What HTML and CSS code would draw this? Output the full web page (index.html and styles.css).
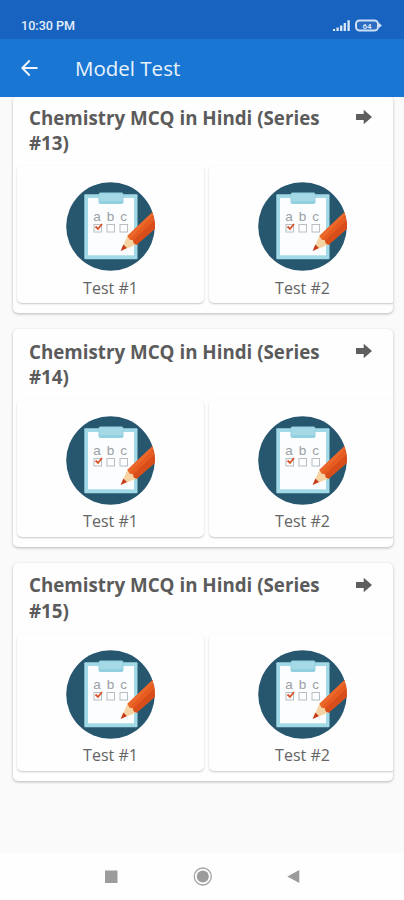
FILE: index.html
```html
<!DOCTYPE html>
<html lang="en">
<head>
<meta charset="utf-8">
<title>Model Test</title>
<link rel="stylesheet" href="styles.css">
</head>
<body>
<svg class="defs" width="0" height="0" aria-hidden="true">
  <defs>
    <clipPath id="disc"><circle cx="44.5" cy="44.5" r="44.5"/></clipPath>
    <symbol id="quiz" viewBox="0 0 90 90">
      <circle cx="44.5" cy="44.5" r="44.3" fill="#27566f"/>
      <rect x="18.3" y="12.3" width="53.2" height="65" rx="1" fill="#a2d9e6"/>
      <rect x="22" y="16" width="46" height="57.3" fill="#fcfdfe"/>
      <rect x="32.5" y="10.5" width="25" height="11.5" rx="2" fill="#92cfdf"/>
      <rect x="33.5" y="11.5" width="23" height="7.5" rx="1.5" fill="#a6d9e6"/>
      <g class="letters" text-anchor="middle"><text x="31" y="39.4">a</text><text x="44.5" y="39.4">b</text><text x="57.5" y="39.4">c</text></g>
      <g fill="none" stroke="#b8bec2" stroke-width="1"><rect x="28" y="42.5" width="7.5" height="7.5"/><rect x="41" y="42.5" width="7.5" height="7.5"/><rect x="54" y="42.5" width="7.5" height="7.5"/></g>
      <path d="M29.5 44.5L32 47L36 42" fill="none" stroke="#d9532c" stroke-width="1.8"/>
      <g clip-path="url(#disc)">
        <path d="M54.7 68.9L61.5 53.8L70.5 62.5Z" fill="#f5d3a2"/>
        <path d="M54.7 68.9L57.3 62.6L61 66Z" fill="#c63d1e"/>
        <path d="M61.5 53.8L90 26.8V46L70.5 62.8L68 61.5L67 58.5L63.7 57.5Z" fill="#e65c20"/>
        <path d="M67 58.5L90 37V46L70.5 62.8L68 61.5Z" fill="#d84e1b"/>
        <path d="M61.5 53.8L90 26.8V30L63.7 57.5Z" fill="#ea682b"/>
      </g>
    </symbol>
    <symbol id="go" viewBox="0 0 18 16"><path d="M1 4.9H8.7V.8L17 8L8.7 15.2V11.1H1Z" fill="#5e5e5e"/></symbol>
  </defs>
</svg>
<div class="screen">
  <div class="status">
    <span class="clock">10:30 PM</span>
    <svg class="indicators" width="50" height="14" viewBox="0 0 50 14">
      <path d="M1 12V10M4.6 12V8.5M8.2 12V6.5M11.8 12V4M15.6 12V1.2" stroke="#dbe8fa" stroke-width="2.3"/>
      <rect x="23" y="1.5" width="22" height="10" rx="3.5" fill="#2c6cc0" stroke="#cde0f8" stroke-width="2"/>
      <path d="M46 4L49 6.5L46 9Z" fill="#cde0f8"/>
      <text class="level" x="34" y="9.7" text-anchor="middle">64</text>
    </svg>
  </div>
  <header class="bar">
    <svg width="18" height="18" viewBox="0 0 18 18"><path d="M16.5 9H2M8.7 1.5L1.3 9L8.7 16.5" fill="none" stroke="#eef5fd" stroke-width="2"/></svg>
    <h1>Model Test</h1>
  </header>
  <main class="list">
    <section class="card">
      <div class="head"><h2>Chemistry MCQ in Hindi (Series<br>#13)</h2><svg class="go"><use href="#go"/></svg></div>
      <div class="tests"><div class="test"><svg class="pic"><use href="#quiz"/></svg><span>Test #1</span></div><div class="test"><svg class="pic"><use href="#quiz"/></svg><span>Test #2</span></div></div>
    </section>
    <section class="card">
      <div class="head"><h2>Chemistry MCQ in Hindi (Series<br>#14)</h2><svg class="go"><use href="#go"/></svg></div>
      <div class="tests"><div class="test"><svg class="pic"><use href="#quiz"/></svg><span>Test #1</span></div><div class="test"><svg class="pic"><use href="#quiz"/></svg><span>Test #2</span></div></div>
    </section>
    <section class="card">
      <div class="head"><h2>Chemistry MCQ in Hindi (Series<br>#15)</h2><svg class="go"><use href="#go"/></svg></div>
      <div class="tests"><div class="test"><svg class="pic"><use href="#quiz"/></svg><span>Test #1</span></div><div class="test"><svg class="pic"><use href="#quiz"/></svg><span>Test #2</span></div></div>
    </section>
  </main>
  <nav class="nav">
    <svg width="202" height="24" viewBox="0 0 202 24" fill="#9c9c9c">
      <rect x="4" y="5.5" width="12.5" height="12.5"/>
      <circle cx="101.8" cy="11.5" r="8.5" fill="none" stroke="#a3a3a3" stroke-width="1.3"/><circle cx="101.8" cy="11.5" r="6"/>
      <path d="M186.3 11.5L198.3 5V18Z"/>
    </svg>
  </nav>
</div>
</body>
</html>
```
FILE: styles.css
```css
* { box-sizing: border-box; }
body { margin: 0; font-family: "Open Sans", "Noto Sans", sans-serif; background: #fafafa; }
.defs { position: absolute; }
.screen { width: 404px; height: 900px; display: flex; flex-direction: column; overflow: hidden; }
.status { height: 39px; flex: none; background: #1763bf; display: flex; justify-content: space-between; align-items: flex-start; padding: 18px 21px 0 21px; }
.clock { font: 500 12.6px/16px Roboto, sans-serif; color: #e4eefb; }
.indicators { margin-top: 1px; }
.level { font: 700 8px Roboto, sans-serif; fill: #cde0f8; }
.bar { height: 58px; flex: none; background: #1976d2; display: flex; align-items: center; gap: 36px; padding-left: 21px; }
.bar h1 { margin: 0; padding-bottom: 1px; font-size: 20.5px; font-weight: 400; line-height: 28px; color: #eaf3fd; }
.list { flex: 1; min-height: 0; overflow: hidden; padding: 0 11px 0 13px; display: flex; flex-direction: column; gap: 16.3px; }
.card { flex: none; height: 217.5px; background: #fefefe; border-radius: 5px; overflow: hidden; box-shadow: 0 1px 3px rgba(0,0,0,.27); }
.card:first-child { margin-top: -1.5px; }
.head { height: 70.5px; padding: 9.3px 20px 0 16px; display: flex; justify-content: space-between; }
.head h2 { margin: 0; font-size: 18.75px; line-height: 25.5px; font-weight: 700; color: #5b5b5b; white-space: nowrap; }
.go { width: 18px; height: 16px; margin-top: 4.7px; flex: none; }
.tests { display: flex; gap: 5px; padding-left: 4px; }
.test { width: 187px; height: 137px; flex: none; background: #fefefe; border-radius: 5px; box-shadow: 0 1px 2px rgba(0,0,0,.22); display: flex; flex-direction: column; align-items: center; padding-top: 16px; }
.pic { width: 90px; height: 90px; flex: none; }
.test span { margin-top: 4.7px; font-size: 16px; line-height: 22px; color: #646464; }
.letters { font: 13.5px "Liberation Sans", sans-serif; fill: #9aa0a5; }
.nav { height: 47px; flex: none; background: #fefefe; display: flex; justify-content: center; align-items: center; }
```
